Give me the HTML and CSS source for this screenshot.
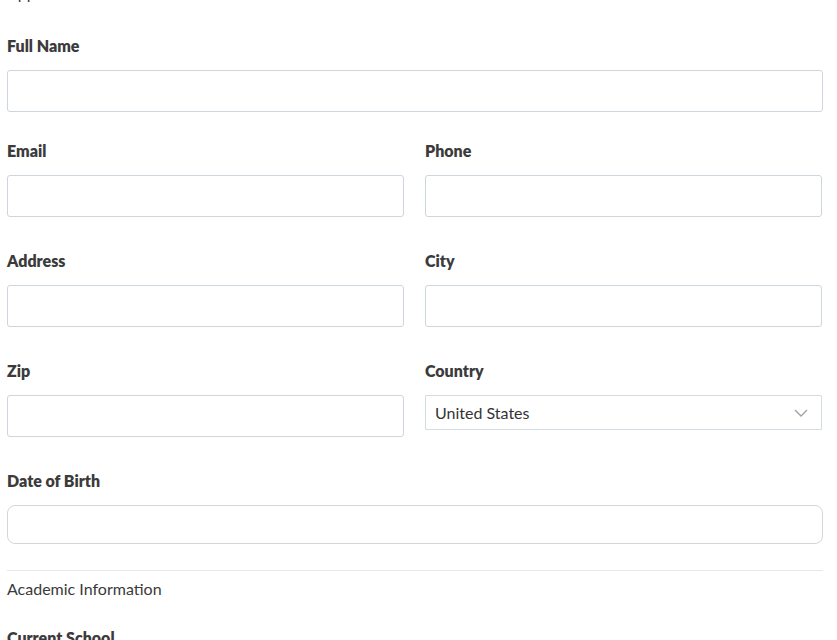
FILE: index.html
```html
<!DOCTYPE html>
<html lang="en">
<head>
    <meta charset="UTF-8">
    <meta name="viewport" content="width=device-width, initial-scale=1.0">
    <title>Application Form</title>
    <link rel="stylesheet" href="styles.css">
</head>
<body>
    <form class="app-form">
        <h2 class="section-title section-title-top">Applicant Details</h2>

        <div class="field field-first">
            <label class="field-label" for="fullName">Full Name</label>
            <input class="text-input" type="text" id="fullName">
        </div>

        <div class="field-row">
            <div class="field">
                <label class="field-label" for="email">Email</label>
                <input class="text-input" type="email" id="email">
            </div>
            <div class="field">
                <label class="field-label" for="phone">Phone</label>
                <input class="text-input" type="tel" id="phone">
            </div>
        </div>

        <div class="field-row">
            <div class="field">
                <label class="field-label" for="address">Address</label>
                <input class="text-input" type="text" id="address">
            </div>
            <div class="field">
                <label class="field-label" for="city">City</label>
                <input class="text-input" type="text" id="city">
            </div>
        </div>

        <div class="field-row">
            <div class="field">
                <label class="field-label" for="zip">Zip</label>
                <input class="text-input" type="text" id="zip">
            </div>
            <div class="field">
                <label class="field-label" for="country">Country</label>
                <div class="select-wrap">
                    <select class="select-input" id="country">
                        <option>United States</option>
                        <option>Canada</option>
                        <option>United Kingdom</option>
                    </select>
                    <svg class="select-chevron" width="14" height="8" viewBox="0 0 14 8" fill="none">
                        <path d="M1 1l6 6 6-6" stroke="#9aa1a8" stroke-width="1.3"/>
                    </svg>
                </div>
            </div>
        </div>

        <div class="field">
            <label class="field-label" for="dob">Date of Birth</label>
            <input class="text-input date-input" type="text" id="dob">
        </div>

        <hr class="divider">

        <h2 class="section-title">Academic Information</h2>

        <div class="field">
            <label class="field-label" for="school">Current School</label>
            <input class="text-input" type="text" id="school">
        </div>
    </form>
</body>
</html>
```

FILE: styles.css
```css
body {
    font-family: Lato, 'Noto Sans', sans-serif;
    margin: 0;
    background-color: #fff;
    color: #333;
    overflow: hidden;
}
.app-form {
    width: 816px;
    padding-left: 7px;
}
.section-title {
    font-size: 16px;
    font-weight: 400;
    line-height: 20px;
    color: #3a3a3a;
    margin: 0 0 29px 0;
}
.section-title-top {
    margin-top: -17px;
    margin-bottom: 33px;
}
.field {
    margin-bottom: 34px;
}
.field-first {
    margin-bottom: 29px;
}
.field-row {
    display: grid;
    grid-template-columns: 397px 397px;
    gap: 21px;
}
.field-label {
    display: block;
    font-size: 16px;
    font-weight: 800;
    line-height: 20px;
    color: #3b3b3b;
    margin-bottom: 14px;
}
.text-input {
    display: block;
    box-sizing: border-box;
    width: 100%;
    height: 42px;
    border: 1px solid #cdd5dd;
    border-radius: 3px;
    padding: 0 10px;
    font-family: inherit;
    font-size: 16px;
    background: #fff;
}
.date-input {
    height: 39px;
    border-radius: 8px;
    border-color: #d3d6dc;
}
.select-wrap {
    position: relative;
}
.select-input {
    display: block;
    box-sizing: border-box;
    width: 100%;
    height: 35px;
    border: 1px solid #d3dbe3;
    border-radius: 1px;
    padding: 0 0 0 9px;
    font-family: inherit;
    font-size: 16px;
    color: #333;
    background: #fff;
    appearance: none;
    -webkit-appearance: none;
}
.select-chevron {
    position: absolute;
    right: 14px;
    top: 14px;
    pointer-events: none;
}
.divider {
    border: none;
    border-top: 1px solid #e8e8ec;
    margin: -8px 0 8px 0;
}
```
